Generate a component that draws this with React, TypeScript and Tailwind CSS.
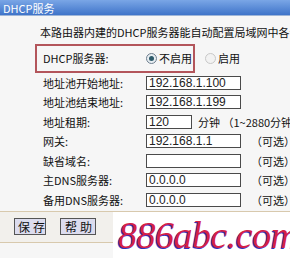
const cjk = { fontFamily: '"SimSun", "Noto Sans CJK SC", sans-serif' };
const sans = { fontFamily: '"Liberation Sans", Arial, sans-serif' };

function Radio({ checked }: { checked?: boolean }) {
  return (
    <span
      className={
        "inline-flex shrink-0 items-center justify-center w-[11px] h-[11px] rounded-full border " +
        (checked ? "border-[#6f7f8f] bg-[#e8eef2]" : "border-[#c8c8c8] bg-[#f2f2f2]")
      }
    >
      {checked && <span className="w-[5px] h-[5px] rounded-full bg-[#2d5a6a]" />}
    </span>
  );
}

function Field({ value, w = "w-[95px]" }: { value?: string; w?: string }) {
  return (
    <div
      className={`${w} shrink-0 h-[14px] border border-[#4a4a4a] bg-white text-[12px] leading-[12px] pl-[2px] text-[#222]`}
      style={sans}
    >
      {value}
    </div>
  );
}

function Row({ label, children }: { label: string; children?: React.ReactNode }) {
  return (
    <div className="flex items-center h-[19.5px]">
      <div className="w-[103px] shrink-0 text-[11px] whitespace-nowrap">{label}</div>
      <div className="flex items-center whitespace-nowrap">{children}</div>
    </div>
  );
}

const Optional = () => <span className="ml-[10px] text-[11px] whitespace-nowrap">（可选）</span>;

export default function App() {
  return (
    <div className="relative w-[290px] h-[258px] overflow-hidden bg-[#f6f6f6] text-[#111]" style={cjk}>
      <div className="h-[16px] bg-gradient-to-b from-[#7aa6e6] to-[#3f74c9] text-white text-[11px] leading-[16px] pl-[3px] border-b border-[#9fb6d8]">
        DHCP服务
      </div>
      <div className="pl-[43px] pt-[10px]">
        <div className="text-[11px] leading-[13px] whitespace-nowrap -ml-[3px]">
          本路由器内建的DHCP服务器能自动配置局域网中各计算机的TCP/IP协议。
        </div>
        <div className="flex items-center mt-[5px] -ml-[8px] h-[29px] whitespace-nowrap">
          <div className="flex items-center shrink-0 w-[160px] h-[29px] border-2 border-[#b3555b] pl-[6px]">
            <span className="w-[103px] shrink-0 text-[11px]">DHCP服务器:</span>
            <Radio checked />
            <span className="ml-[2px] text-[11px]">不启用</span>
          </div>
          <span className="ml-[10px] flex"><Radio /></span>
          <span className="ml-[2px] text-[11px]">启用</span>
        </div>
        <div>
          <Row label="地址池开始地址:"><Field value="192.168.1.100" /></Row>
          <Row label="地址池结束地址:"><Field value="192.168.1.199" /></Row>
          <Row label="地址租期:">
            <Field value="120" w="w-[46px]" />
            <span className="ml-[6px] text-[11px]">分钟 （1~2880分钟，缺省为120分钟）</span>
          </Row>
          <Row label="网关:"><Field value="192.168.1.1" /><Optional /></Row>
          <Row label="缺省域名:"><Field /><Optional /></Row>
          <Row label="主DNS服务器:"><Field value="0.0.0.0" /><Optional /></Row>
          <Row label="备用DNS服务器:"><Field value="0.0.0.0" /><Optional /></Row>
        </div>
      </div>
      <div className="mt-[1px] h-[32px] border-y border-[#d8c9ad] bg-[#f2f0ec] flex items-center pl-[14px] gap-[14px]">
        <button className="w-[32px] h-[17px] shrink-0 whitespace-nowrap border border-[#555] bg-[#dcdcee] text-[12px] leading-[15px] tracking-[3px] pl-[3px]">保存</button>
        <button className="w-[36px] h-[17px] shrink-0 whitespace-nowrap border border-[#555] bg-[#dcdcee] text-[12px] leading-[15px] tracking-[3px] pl-[4px]">帮助</button>
      </div>
      <div className="absolute left-[113px] top-[212px] w-[177px] h-[46px] bg-white flex items-center pl-[5px]">
        <span
          className="italic text-[38px] leading-none text-[#d42048] tracking-[-0.5px]"
          style={{ fontFamily: '"Liberation Serif", serif', textShadow: "-1px 1px 0 #3030c0" }}
        >
          886abc.com
        </span>
      </div>
    </div>
  );
}
